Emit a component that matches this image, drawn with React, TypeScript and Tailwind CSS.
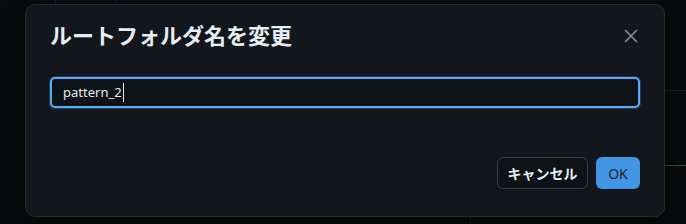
import React from "react";

export default function App() {
  return (
    <div
      className="relative h-[224px] w-[686px] overflow-hidden bg-[#090b0d]"
      style={{ fontFamily: '"Noto Sans", "Noto Sans CJK JP", sans-serif' }}
    >
      {/* faint background lines behind modal */}
      <div className="absolute left-[55px] top-0 h-[6px] w-px bg-[#161a1f]" />
      <div className="absolute left-[115px] top-0 h-[6px] w-px bg-[#161a1f]" />
      <div className="absolute left-[470px] bottom-0 h-[8px] w-px bg-[#1c2127]" />
      <div className="absolute right-0 top-[90px] h-px w-[22px] bg-[#1a1f25]" />
      <div className="absolute right-0 top-[165px] h-px w-[22px] bg-[#1f5f2c]" />

      <div className="relative ml-[25px] mt-[4px] flex h-[213px] w-[640px] flex-col rounded-[10px] border border-[#262b32] bg-[#13171d] pl-6 pr-6 pt-4 pb-[27px] shadow-[0_8px_24px_rgba(0,0,0,0.6)]">
        <div className="flex h-7 items-center justify-between">
          <h2 className="text-[22px] font-bold leading-7 text-[#e6edf3]">
            ルートフォルダ名を変更
          </h2>
          <svg width="16" height="16" viewBox="0 0 16 16" className="mt-[2px] mr-[1px]">
            <path
              d="M2.5 2.5 L13.5 13.5 M13.5 2.5 L2.5 13.5"
              stroke="#8b949e"
              strokeWidth="1.5"
              strokeLinecap="round"
            />
          </svg>
        </div>

        <div className="mt-7 flex h-[31px] items-center rounded-[5px] border-2 border-[#5aa9f7] bg-[#0f1318] pl-[11px] shadow-[0_0_0_1px_rgba(90,169,247,0.25)]">
          <span className="text-[13px] leading-none text-[#e6edf3]">pattern_2</span>
          <span className="ml-[1px] h-[19px] w-px bg-[#e6edf3]" />
        </div>

        <div className="mt-auto flex justify-end gap-2">
          <button className="flex h-8 w-[91px] items-center justify-center rounded-md border border-[#3a4048] bg-[#0f1318] text-[14px] font-bold text-[#e6edf3]">
            キャンセル
          </button>
          <button className="flex h-8 w-[44px] items-center justify-center rounded-md bg-[#4295e3] text-[14px] text-[#1b2430]">
            OK
          </button>
        </div>
      </div>
    </div>
  );
}
